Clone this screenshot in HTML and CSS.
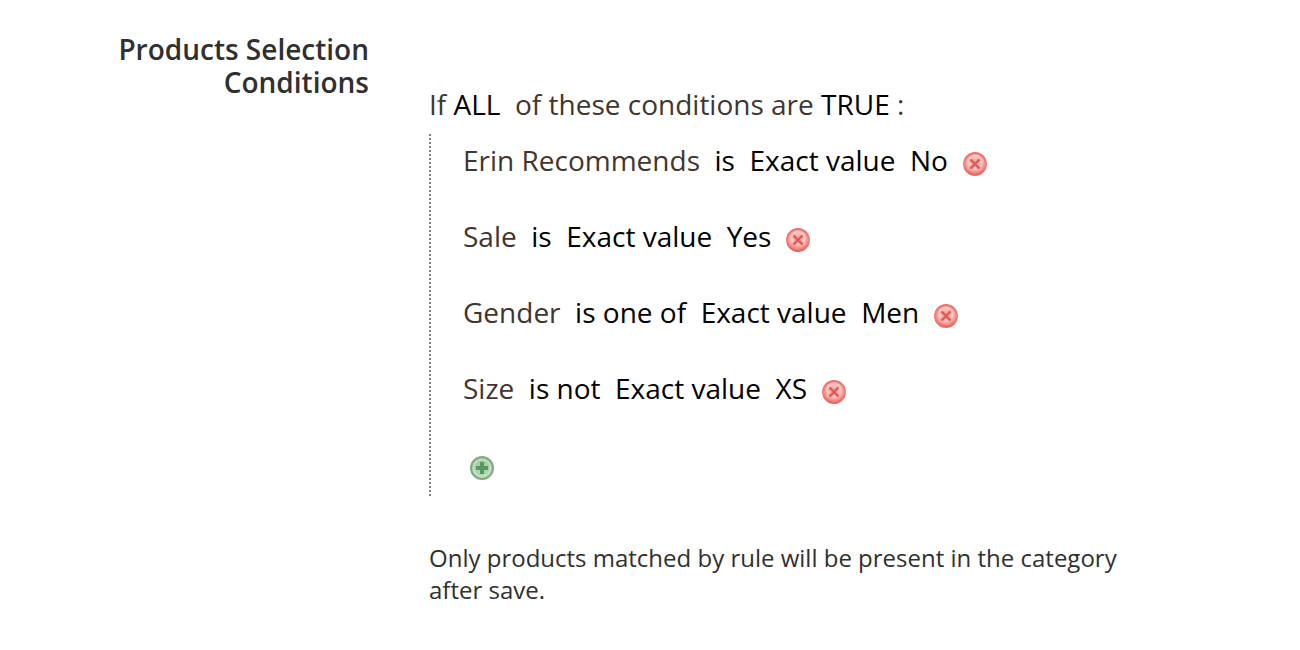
FILE: index.html
```html
<!DOCTYPE html>
<html lang="en">
<head>
<meta charset="utf-8">
<meta name="viewport" content="width=device-width, initial-scale=1">
<title>Products Selection Conditions</title>
<link rel="stylesheet" href="styles.css">
</head>
<body>
<svg class="defs" aria-hidden="true">
  <defs>
    <radialGradient id="red-fill" cx="0.5" cy="0.42" r="0.6">
      <stop offset="0" stop-color="#f4a8a4"/>
      <stop offset="0.5" stop-color="#f9c6c3"/>
      <stop offset="0.75" stop-color="#f2928d"/>
      <stop offset="1" stop-color="#e5645e"/>
    </radialGradient>
    <linearGradient id="red-rim" x1="0" y1="0" x2="0" y2="1">
      <stop offset="0" stop-color="#ea706b"/>
      <stop offset="0.5" stop-color="#ee8782"/>
      <stop offset="1" stop-color="#e8665f"/>
    </linearGradient>
    <linearGradient id="green-fill" x1="0" y1="0" x2="0" y2="1">
      <stop offset="0" stop-color="#9fc5a2"/>
      <stop offset="1" stop-color="#bcd8bc"/>
    </linearGradient>
    <symbol id="icon-remove" viewBox="0 0 24 24">
      <circle cx="12" cy="12" r="11" fill="url(#red-fill)" stroke="url(#red-rim)" stroke-width="2"/>
      <path d="M7.500 7.500l9 9M16.500 7.500l-9 9" fill="none" stroke="#ee8984" stroke-width="4" opacity="0.5"/>
      <path d="M7.500 7.500l9 9M16.500 7.500l-9 9" fill="none" stroke="#df5752" stroke-width="2"/>
    </symbol>
    <symbol id="icon-add" viewBox="0 0 24 24">
      <circle cx="12" cy="12" r="11" fill="url(#green-fill)" stroke="#7fac82" stroke-width="2"/>
      <circle cx="12" cy="12" r="8.500" fill="none" stroke="#c9dfc8" stroke-width="1.500"/>
      <path d="M12 6v12M6 12h12" fill="none" stroke="#559b61" stroke-width="4"/>
    </symbol>
  </defs>
</svg>
<main class="field">
  <h1 class="label">Products Selection Conditions</h1>
  <section class="control">
    <p class="summary">If <a href="#aggregator">ALL</a>&nbsp; of these conditions are <a href="#value">TRUE</a> :</p>
    <ul class="rules">
      <li class="rule">Erin Recommends&nbsp; <a href="#operator">is</a>&nbsp; <a href="#type">Exact value</a>&nbsp; <a href="#value">No</a>&nbsp; <button class="icon-button" type="button" aria-label="Remove Erin Recommends"><svg class="icon"><use href="#icon-remove"/></svg></button></li>
      <li class="rule">Sale&nbsp; <a href="#operator">is</a>&nbsp; <a href="#type">Exact value</a>&nbsp; <a href="#value">Yes</a>&nbsp; <button class="icon-button" type="button" aria-label="Remove Sale"><svg class="icon"><use href="#icon-remove"/></svg></button></li>
      <li class="rule">Gender&nbsp; <a href="#operator">is one of</a>&nbsp; <a href="#type">Exact value</a>&nbsp; <a href="#value">Men</a>&nbsp; <button class="icon-button" type="button" aria-label="Remove Gender"><svg class="icon"><use href="#icon-remove"/></svg></button></li>
      <li class="rule">Size&nbsp; <a href="#operator">is not</a>&nbsp; <a href="#type">Exact value</a>&nbsp; <a href="#value">XS</a>&nbsp; <button class="icon-button" type="button" aria-label="Remove Size"><svg class="icon"><use href="#icon-remove"/></svg></button></li>
      <li class="rule rule-new"><button class="icon-button" type="button" aria-label="Add condition"><svg class="icon"><use href="#icon-add"/></svg></button></li>
    </ul>
    <p class="note">Only products matched by rule will be present in the category after save.</p>
  </section>
</main>
</body>
</html>
```

FILE: styles.css
```css
* {
  box-sizing: border-box;
}

body {
  margin: 0;
  background: #fff;
  color: #303030;
  font-family: "Open Sans", "Noto Sans", sans-serif;
  font-size: 28px;
  line-height: 36px;
}

.defs {
  position: absolute;
  width: 0;
  height: 0;
}

.field {
  display: grid;
  grid-template-columns: minmax(250px, 369fr) minmax(0, 871fr);
  column-gap: 60px;
  padding-top: 33px;
}

.label {
  justify-self: end;
  max-width: 300px;
  margin: 0;
  font-size: 28px;
  font-weight: 600;
  line-height: 33px;
  text-align: right;
}

.control {
  padding-top: 53px;
}

.summary {
  margin: 0 0 12px;
  color: #41362f;
}

a {
  color: #000;
  text-decoration: none;
}

.rules {
  display: grid;
  row-gap: 40px;
  margin: 0;
  padding: 8px 0 14px 34px;
  list-style: none;
  background: repeating-linear-gradient(#7d7d7d 0 2px, transparent 2px 4px) left top / 2px 100% no-repeat;
}

.rule {
  color: #41362f;
}

.rule-new {
  padding-left: 7px;
}

.icon-button {
  width: 24px;
  height: 24px;
  margin: 0;
  padding: 0;
  border: 0;
  border-radius: 50%;
  background: none;
  vertical-align: -5px;
  cursor: pointer;
}

.icon {
  display: block;
  width: 24px;
  height: 24px;
}

.note {
  max-width: 720px;
  margin: 46px 0 0;
  font-size: 24px;
  line-height: 32px;
}
```
